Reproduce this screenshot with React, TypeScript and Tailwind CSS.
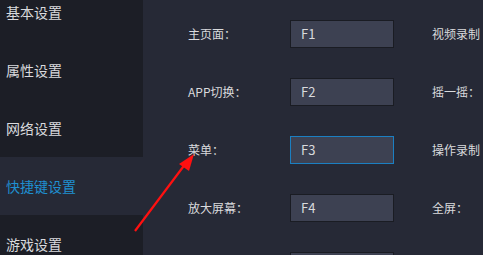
import React from "react";

const side = ["基本设置", "属性设置", "网络设置", "快捷键设置", "游戏设置"];
const rows: [string, string, string][] = [
  ["主页面：", "F1", "视频录制"],
  ["APP切换：", "F2", "摇一摇："],
  ["菜单：", "F3", "操作录制"],
  ["放大屏幕：", "F4", "全屏："],
  ["", "", ""],
];

export default function App() {
  return (
    <div
      className="relative flex h-[255px] w-[483px] overflow-hidden bg-[#262936] text-[#d9dadd]"
      style={{ fontFamily: '"Noto Sans CJK SC", "Noto Sans", sans-serif' }}
    >
      <div className="flex w-[143px] shrink-0 flex-col bg-[#1c1e26]">
        <div className="-mt-[17px] flex flex-col">
          {side.map((s, i) => (
            <div
              key={s}
              className={
                "flex h-[58px] shrink-0 items-center pl-[6px] text-[14px] " +
                (i === 3 ? "bg-[#262936] text-[#1f8fd0]" : "")
              }
            >
              {s}
            </div>
          ))}
        </div>
      </div>
      <div className="flex flex-1 flex-col gap-[30px] pl-[45px] pt-[20px]">
        {rows.map(([l, k, r], i) => (
          <div key={i} className="flex h-[28px] shrink-0 items-center text-[12px]">
            <div className="w-[102px] shrink-0">{l}</div>
            <div
              className={
                "flex h-[28px] w-[104px] shrink-0 items-center border bg-[#3d4152] pl-[10px] text-[13px] " +
                (i === 2 ? "border-[#1b7fc2]" : "border-[#1a1c23]")
              }
            >
              {k}
            </div>
            <div className="ml-[38px] whitespace-nowrap">{r}</div>
          </div>
        ))}
      </div>
      <svg className="absolute left-0 top-0" width="483" height="255">
        <line x1="135" y1="231" x2="186" y2="163" stroke="#ff1010" strokeWidth="2.2" />
        <polygon points="194,154 179,164 189,171" fill="#ff1010" />
      </svg>
    </div>
  );
}
